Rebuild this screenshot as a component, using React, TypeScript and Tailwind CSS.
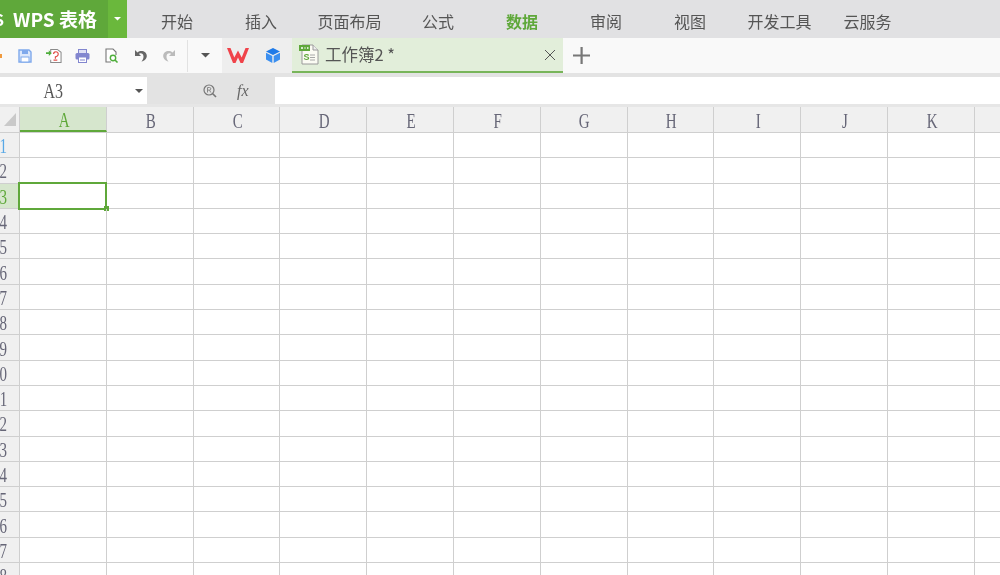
import {FC} from 'react';

const tabs = [
  {label: '开始', w: 'w-[84px]'},
  {label: '插入', w: 'w-[84px]'},
  {label: '页面布局', w: 'w-[93px]'},
  {label: '公式', w: 'w-[84px]'},
  {label: '数据', w: 'w-[84px]', active: true},
  {label: '审阅', w: 'w-[84px]'},
  {label: '视图', w: 'w-[84px]'},
  {label: '开发工具', w: 'w-[95px]'},
  {label: '云服务', w: 'w-[81px]'},
];

const columns = ['A', 'B', 'C', 'D', 'E', 'F', 'G', 'H', 'I', 'J', 'K', ''];
const rows = Array.from({length: 18}, (_, i) => i + 1);

const SaveIcon = () => (
  <svg width="14" height="14" viewBox="0 0 14 14" fill="none">
    <path d="M1 1h10l2 2v10H1z" fill="#dbe7fb" stroke="#7fa9ec" strokeWidth="1.4" />
    <rect x="4" y="1" width="6" height="4" fill="#7fa9ec" />
    <rect x="3" y="8" width="8" height="5" fill="#fff" stroke="#7fa9ec" />
  </svg>
);

const BackupIcon = () => (
  <svg width="16" height="16" viewBox="0 0 17 16" fill="none">
    <path d="M5 5V1h7l4 3v11H5v-3" stroke="#8a8a8a" strokeWidth="1.1" fill="#fff" />
    <path d="M0 4h3V2l3 3-3 3V6H0z" fill="#4fae3c" />
    <path d="M8 6a2.5 2.5 0 1 1 4 2l-2 1v2M8 12.500h4" stroke="#e2504a" strokeWidth="1.3" />
  </svg>
);

const PrintIcon = () => (
  <svg width="15" height="14" viewBox="0 0 15 14" fill="none">
    <rect x="3.500" y="0.500" width="8" height="4" fill="#dfe0f5" stroke="#8286cf" />
    <rect x="0.500" y="4" width="14" height="6.500" rx="1.500" fill="#8286cf" />
    <rect x="3.500" y="8" width="8" height="5.500" fill="#fff" stroke="#8286cf" />
    <path d="M5 11h5" stroke="#8286cf" />
  </svg>
);

const PreviewIcon = () => (
  <svg width="14" height="15" viewBox="0 0 14 15" fill="none">
    <path d="M6 14H1V1h7l3 3v3" stroke="#777" strokeWidth="1.100" fill="#fff" />
    <circle cx="8" cy="10" r="2.700" stroke="#4fae3c" strokeWidth="1.400" fill="#fff" />
    <path d="M10 12l2.500 2.500" stroke="#4fae3c" strokeWidth="1.600" />
  </svg>
);

const UndoIcon = ({color, flip}: {color: string; flip?: boolean}) => (
  <svg width="13" height="13" viewBox="0 0 13 13" fill="none" className={flip ? '-scale-x-100' : ''}>
    <path d="M1 1v6h6L4.800 4.800C6.800 3.600 9.500 4.500 9.500 7.500c0 1.800-.5 3.300-2 5C10.500 12 12.800 9.500 12.800 7 12.800 2.500 7 .500 3.500 3.500z" fill={color} />
  </svg>
);

const CaretIcon = ({size = 9, color = '#555'}: {size?: number; color?: string}) => (
  <svg width={size} height={size / 2} viewBox="0 0 10 5">
    <path d="M0 0h10L5 5z" fill={color} />
  </svg>
);

const WpsLogo = () => (
  <svg width="22" height="15" viewBox="0 0 22 15">
    <path
      d="M0 0h3.500l3.800 9.500L11 2.500l3.700 7L18.500 0H22l-6 15h-2.500L11 9.500 8.500 15H6z"
      fill="#f0434a"
    />
  </svg>
);

const CubeIcon = () => (
  <svg width="14" height="15" viewBox="0 0 14 15">
    <path d="M7 0l7 3.500L7 7 0 3.500z" fill="#1f7ae8" />
    <path d="M0 4.700l6.300 3.200V15L0 11.500z" fill="#3b8ff0" />
    <path d="M14 4.700L7.700 7.900V15l6.300-3.500z" fill="#3b8ff0" />
  </svg>
);

const SheetIcon = () => (
  <svg width="20" height="21" viewBox="0 0 20 21" fill="none">
    <path d="M3 1h11l5 5v14H3z" fill="#fbfbf3" stroke="#9a9a9a" />
    <path d="M14 1v5h5" stroke="#9a9a9a" fill="#eee" />
    <rect x="0" y="1" width="11" height="6" fill="#5fa83a" />
    <path d="M2 4h2M5.500 4h1M8 4h1.500" stroke="#fff" strokeWidth="1.500" />
    <text x="4.500" y="16" fontSize="9" fontWeight="700" fill="#5fa83a" fontFamily="Liberation Sans, sans-serif">S</text>
    <path d="M11 11h5M11 13.500h5M11 16h5" stroke="#a8a8a8" />
  </svg>
);

const ZoomIcon = () => (
  <svg width="14" height="14" viewBox="0 0 14 14" fill="none">
    <circle cx="6" cy="6" r="5" stroke="#777" strokeWidth="1.200" />
    <path d="M9.500 9.500 13 13" stroke="#777" strokeWidth="1.600" />
    <path d="M4.500 8.500v-5h2a1.300 1.300 0 0 1 0 2.600h-2m2 0 1.300 2.400" stroke="#888" />
  </svg>
);

const TitleBar: FC = () => (
  <div className="flex h-[38px] bg-[#e1e1e3]">
    <div className="flex w-[108px] items-center overflow-hidden bg-[#5fa83a] text-white">
      <span className="ml-[-6px] w-[19px] shrink-0 text-[16px] font-bold">S</span>
      <span className="whitespace-nowrap text-[19px] font-bold">WPS 表格</span>
    </div>
    <div className="flex w-[19px] items-center justify-center bg-[#6ab83c]">
      <CaretIcon size={7} color="#fff" />
    </div>
    <div className="ml-[8px] flex">
      {tabs.map(t => (
        <div
          key={t.label}
          className={`${t.w} flex items-center justify-center pt-[4px] text-[16px] ${t.active ? 'font-bold text-[#5fa83a]' : 'text-[#555]'}`}>
          {t.label}
        </div>
      ))}
    </div>
  </div>
);

const ToolBar: FC = () => (
  <div className="flex h-[35px] bg-[#f9f9f9]">
    <div className="flex w-[222px] items-center">
      <div className="h-[4px] w-[2px] bg-[#f09a3e]" />
      <div className="ml-[16px]"><SaveIcon /></div>
      <div className="ml-[14px]"><BackupIcon /></div>
      <div className="ml-[13px]"><PrintIcon /></div>
      <div className="ml-[15px]"><PreviewIcon /></div>
      <div className="ml-[15px]"><UndoIcon color="#666" /></div>
      <div className="ml-[16px]"><UndoIcon color="#bbb" flip /></div>
      <div className="ml-[11px] h-[32px] w-px bg-[#e2e2e2]" />
      <div className="ml-[13px]"><CaretIcon size={9} /></div>
    </div>
    <div className="flex w-[70px] items-center bg-[#eeeeee]">
      <div className="ml-[5px]"><WpsLogo /></div>
      <div className="ml-[17px]"><CubeIcon /></div>
    </div>
    <div className="flex w-[271px] items-center border-b-2 border-[#78b55a] bg-[#e2eeda] text-[#555]">
      <div className="ml-[7px]"><SheetIcon /></div>
      <span className="ml-[6px] text-[16.5px]">工作簿2 *</span>
      <svg className="ml-auto mr-[8px]" width="10" height="10" viewBox="0 0 10 10" stroke="#555">
        <path d="M0 0l10 10M10 0L0 10" />
      </svg>
    </div>
    <svg className="ml-[10px] self-center" width="17" height="17" viewBox="0 0 17 17" fill="#777">
      <path d="M7.500 0h2.200v7.400H17v2.200H9.700V17H7.500V9.600H0V7.400h7.500z" />
    </svg>
  </div>
);

const FormulaBar: FC = () => (
  <div className="flex h-[34px] border-b-[3px] border-[#e6e6e6] bg-[#e3e3e3] pt-[4px]">
    <div className="flex w-[147px] items-center bg-white">
      <span className="ml-[41px] inline-block scale-x-80 text-[20px] leading-none text-[#555] [font-family:'Liberation_Serif',serif]">A3</span>
      <div className="ml-auto mr-[4px]"><CaretIcon size={8} /></div>
    </div>
    <div className="flex w-[128px] items-center">
      <div className="ml-[56px]"><ZoomIcon /></div>
      <span className="ml-[20px] text-[16px] italic text-[#666] [font-family:'Liberation_Serif',serif]">fx</span>
    </div>
    <div className="flex-1 bg-white" />
  </div>
);

const HeaderRow: FC = () => (
  <div className="flex h-[26px] border-b border-[#cfcfcf] bg-[#f0f0f0]">
    <div className="flex w-[20px] shrink-0 items-center justify-center border-r border-[#cfcfcf]">
      <svg width="12" height="13" viewBox="0 0 12 13">
        <path d="M12 0v13H0z" fill="#c9c9c9" />
      </svg>
    </div>
    {columns.map((c, i) => (
      <div
        key={c || 'rest'}
        className={`flex w-[86.8px] shrink-0 items-center justify-center border-r border-[#cfcfcf] pt-[3px] pl-[2px] text-[20px] leading-none [font-family:'Liberation_Serif',serif] ${
          i === 0 ? 'border-b-2 border-b-[#5fa83a] bg-[#d6e6cd] text-[#5fa83a]' : 'text-[#667]'
        }`}>
        <span className="inline-block scale-x-75">{c}</span>
      </div>
    ))}
  </div>
);

const labelColor = (r: number) => {
  if (r === 1) return 'text-[#58a8e6]';
  if (r === 3) return 'text-[#5fa83a]';
  return 'text-[#667]';
};

const GridRow: FC<{row: number}> = ({row}) => (
  <div className="flex h-[25.3px] shrink-0 border-b border-[#cfcfcf]">
    <div
      className={`flex w-[20px] shrink-0 items-center justify-end overflow-hidden border-r border-[#cfcfcf] pt-[2px] pr-[12px] text-[20px] leading-none [font-family:'Liberation_Serif',serif] ${labelColor(row)} ${
        row === 3 ? 'bg-[#d6e6cd]' : 'bg-[#f0f0f0]'
      }`}>
      <span className="inline-block origin-right scale-x-75">{row}</span>
    </div>
    {columns.map((c, i) => (
      <div key={c || 'rest'} className="relative w-[86.8px] shrink-0 border-r border-[#cfcfcf]">
        {row === 3 && i === 0 && (
          <div className="absolute -top-[2px] -left-[2px] h-[28px] w-[89px] border-[2.5px] border-[#5fa83a]">
            <div className="absolute -right-[3.5px] -bottom-[3.5px] h-[5px] w-[5px] bg-[#5fa83a]" />
          </div>
        )}
      </div>
    ))}
  </div>
);

const App: FC = () => (
  <div className="h-[575px] w-[1000px] overflow-hidden bg-white blur-[0.4px] [font-family:'Noto_Sans_CJK_SC','Liberation_Sans',sans-serif]">
    <TitleBar />
    <ToolBar />
    <FormulaBar />
    <HeaderRow />
    {rows.map(r => (
      <GridRow key={r} row={r} />
    ))}
  </div>
);

export default App;
